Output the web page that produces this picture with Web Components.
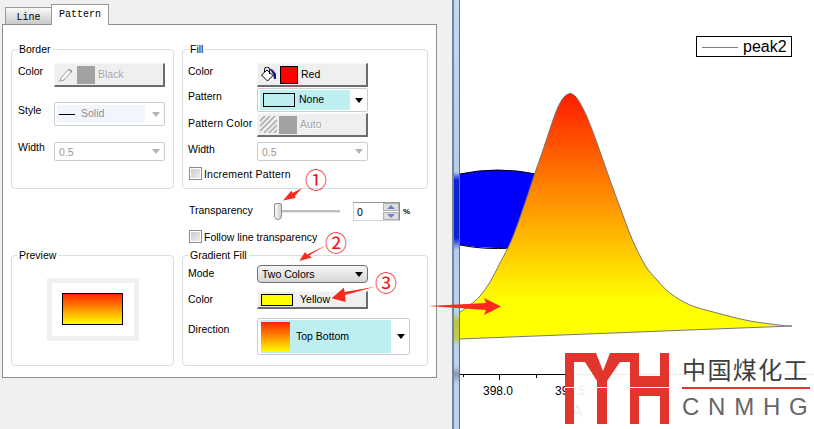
<!doctype html>
<html>
<head>
<meta charset="utf-8">
<title>Pattern</title>
<style>
  html, body { margin: 0; padding: 0; background: #fff; }
  body { width: 814px; height: 429px; overflow: hidden; }
</style>
</head>
<body>
<app-window></app-window>
<script>
(function () {
  class Base extends HTMLElement {
    constructor() {
      super();
      this.attachShadow({ mode: "open" });
    }
    connectedCallback() {
      this.shadowRoot.innerHTML = this.markup();
    }
  }

  class GroupBox extends Base {
    markup() {
      return `
        <style>
          :host { display: block; box-sizing: border-box; position: relative; border: 1px solid #d6dfe6; border-radius: 4px; }
          .title { position: absolute; left: 5px; top: -7px; padding: 0 2px; background: #fff; line-height: 13px; white-space: nowrap; }
        </style>
        <span class="title">${this.getAttribute("title-text")}</span>
        <slot></slot>`;
    }
  }

  class ColorButton extends Base {
    markup() {
      const off = this.hasAttribute("disabled");
      return `
        <style>
          :host { display: flex; box-sizing: border-box; width: 111px; height: 24px; align-items: center;
            background: #efefef; border: 1px solid #f7f7f7; border-right: 2px solid #6c6c6c; border-bottom: 2px solid #6c6c6c; padding-left: 2px; }
          .label { margin-bottom: 2px; color: ${off ? "#a4a4a4" : "#000"}; ${off ? "text-shadow: 1px 1px 0 #fff;" : ""} }
        </style>
        <slot></slot>
        <span class="label">${this.getAttribute("label")}</span>`;
    }
  }

  class ComboBox extends Base {
    markup() {
      const off = this.hasAttribute("disabled");
      const raised = this.hasAttribute("raised");
      return `
        <style>
          :host { display: flex; box-sizing: border-box; width: 111px; height: 24px; align-items: center;
            border: 1px solid ${raised ? "#6f6f6f" : "#c7ced4"}; border-radius: ${raised ? 4 : 2}px;
            background: ${raised ? "linear-gradient(#f6f6f6, #d6d6d6)" : "#fff"}; color: ${off ? "#9a9a9a" : "#000"}; padding-left: 2px; }
          .arrow { margin-left: auto; margin-right: 4px; width: 0; height: 0; flex: none;
            border-left: 4.5px solid transparent; border-right: 4.5px solid transparent;
            border-top: 5px solid ${off ? "#b4b4b4" : "#000"}; }
        </style>
        <slot></slot>
        <span class="arrow"></span>`;
    }
  }

  class CheckField extends Base {
    markup() {
      return `
        <style>
          :host { display: flex; align-items: center; gap: 2px; height: 13px; white-space: nowrap; }
          .box { box-sizing: border-box; width: 13px; height: 13px; border: 1px solid #8b8b8b; outline: 1px solid #fff; outline-offset: -2px;
            background: linear-gradient(135deg, #c6c6c6, #f1f1f1); }
        </style>
        <span class="box"></span><slot></slot>`;
    }
  }

  class SliderField extends Base {
    markup() {
      return `
        <style>
          :host { display: block; position: relative; width: 66px; height: 17px; }
          .track { position: absolute; left: 8px; right: 0; top: 7px; height: 2px; background: #bdbdbd; border-bottom: 1px solid #e6e6e6; }
          .thumb { position: absolute; left: 0; top: 0; box-sizing: border-box; width: 8px; height: 17px; border: 1px solid #8d8d8d;
            border-radius: 2px 2px 4px 4px; background: linear-gradient(90deg, #fafafa, #cfcfcf); }
        </style>
        <span class="track"></span><span class="thumb"></span>`;
    }
  }

  class SpinField extends Base {
    markup() {
      return `
        <style>
          :host { display: flex; box-sizing: border-box; width: 47px; height: 19px; border: 1px solid #ced4da; border-right-color: #8c8c8c; border-top-color: #9a9a9a; align-items: center; padding-left: 3px; }
          .btns { margin-left: auto; width: 16px; display: grid; grid-template-rows: 8px 8px; gap: 1px; }
          .btns span { display: flex; align-items: center; justify-content: center; background: #dedede; border: 1px solid #b0b0b0; box-sizing: border-box; }
          .up { border-left: 4px solid transparent; border-right: 4px solid transparent; border-bottom: 4px solid #6d83c4; }
          .dn { border-left: 4px solid transparent; border-right: 4px solid transparent; border-top: 4px solid #6d83c4; }
        </style>
        <slot></slot>
        <div class="btns"><span><i class="up"></i></span><span><i class="dn"></i></span></div>`;
    }
  }

  class PlotDialog extends Base {
    markup() {
      return `
        <style>
          :host { display: block; width: 452px; height: 429px; background: #f0f0f0; box-sizing: border-box; padding-left: 2px;
            font: 10.5px "Liberation Sans", Arial, sans-serif; color: #000; }
          .tabs { display: flex; height: 24px; align-items: flex-end; padding-left: 3px; font: 10px "Liberation Mono", monospace; }
          .tab { box-sizing: border-box; border: 1px solid #9a9a9a; border-bottom: 0; display: flex; justify-content: center; }
          .tab.line { width: 46px; height: 17px; padding-top: 4px; background: linear-gradient(#fafafa, #c9c9c9); border-right: 0; }
          .tab.on { width: 58px; height: 21px; padding-top: 4px; background: #fff; margin-bottom: -1px; position: relative; }
          .panel { box-sizing: border-box; width: 435px; height: 354px; background: #fff; border: 1px solid #8c8c92; padding: 24px 0 0 8px;
            display: grid; grid-template-columns: 163px 246px; grid-template-rows: 140px 66px 111px; column-gap: 8px; }
          .form { display: grid; align-items: start; }
          .border-form { grid-template-columns: 36px 111px; padding: 13px 0 0 6px; row-gap: 15px; }
          .fill-form { grid-template-columns: 69px 111px; padding: 13px 0 0 5px; row-gap: 1px; }
          .grad-form { grid-template-columns: 69px auto; padding: 9px 0 0 5px; justify-items: start; }
          .lab { line-height: 16px; white-space: nowrap; }
          .val { margin-left: 2px; }
          .up1 { margin-bottom: 2px; }
          .mid { display: flex; flex-direction: column; padding-top: 13px; }
          .trans { display: flex; align-items: center; height: 19px; padding-left: 7px; }
          .trans .lab { width: 85px; margin-bottom: 3px; }
          .trans spin-field { margin-left: 13px; }
          .pct { margin-left: 3px; font-weight: bold; font-size: 8px; }
          .follow { margin: 9px 0 0 7px; }
          .inner { display: flex; align-items: center; }
          .sw { box-sizing: border-box; flex: none; display: block; border: 1px solid #000; }
          .grey { background: #a2a2a2; border: 0; width: 18px; height: 18px; margin: 0 3px 0 4px; }
          .red { background: #f00; width: 18px; height: 18px; margin: 0 3px 0 4px; }
          .cy { background: #bdeef0; }
          svg.ic { width: 15px; height: 15px; flex: none; margin-left: 1px; }
          .preview-wrap { display: flex; padding: 22px 0 0 35px; }
          .preview { box-sizing: border-box; width: 92px; height: 63px; border: 5px solid #f0f0f0; padding: 10px 0 0 10px; }
          .preview i { display: block; box-sizing: border-box; width: 61px; height: 32px; border: 1px solid #000; background: linear-gradient(#ff2400, #ffff00); }
        </style>
        <div class="tabs">
          <div class="tab line">Line</div>
          <div class="tab on">Pattern</div>
        </div>
        <div class="panel">
          <group-box title-text="Border">
            <div class="form border-form">
              <span class="lab">Color</span>
              <color-button label="Black" disabled>
                <svg class="ic" viewBox="0 0 15 15"><path d="M3 11 L11 2 L14 4 L6 13 L2 14 Z" fill="#fff" stroke="#9b9b9b"/><path d="M10.500 2.500 L13.500 5" stroke="#777"/><path d="M0 14h1" stroke="#aaa"/></svg>
                <span class="sw grey"></span>
              </color-button>
              <span class="lab">Style</span>
              <combo-box disabled>
                <span class="inner" style="width:88px;height:18px;background:#f2f6fc;color:#8e8e8e">
                  <i style="display:block;width:16px;height:1px;background:#000;margin:0 6px 0 2px"></i><span class="up1">Solid</span>
                </span>
              </combo-box>
              <span class="lab" style="margin-top:-2px">Width</span>
              <combo-box disabled style="height:19px;margin-top:1px"><span class="val">0.5</span></combo-box>
            </div>
          </group-box>
          <group-box title-text="Fill">
            <div class="form fill-form">
              <span class="lab">Color</span>
              <color-button label="Red">
                <svg class="ic" viewBox="0 0 15 15"><path d="M.500 8 L6 3 L12 8.500 L6.500 14 Z" fill="#fff" stroke="#000"/><path d="M3.500 5 V2.500 A2.500 2.500 0 0 1 8.500 2.500 V7" fill="none" stroke="#000"/><path d="M8 1 L12 3 L15 7 L15 12 L13 12 L12 7 Z" fill="#14148c"/></svg>
                <span class="sw red"></span>
              </color-button>
              <span class="lab">Pattern</span>
              <combo-box>
                <span class="inner cy" style="width:90px;height:20px;gap:4px;padding-left:3px;box-sizing:border-box">
                  <i class="sw cy" style="width:32px;height:14px"></i><span class="up1">None</span>
                </span>
              </combo-box>
              <span class="lab" style="margin-top:2px;letter-spacing:.2px">Pattern Color</span>
              <color-button label="Auto" disabled>
                <svg class="ic" viewBox="0 0 17 17" style="width:17px;height:17px;margin:0 -2px 0 0"><path d="M0 5L5 0M0 10L10 0M0 15L15 0M4 17L17 4M9 17L17 9M14 17L17 14" stroke="#a8a8a8" stroke-width="1.500"/></svg>
                <span class="sw grey"></span>
              </color-button>
              <span class="lab" style="margin-top:3px">Width</span>
              <combo-box disabled style="height:19px;margin-top:4px"><span class="val">0.5</span></combo-box>
              <check-field style="grid-column:1 / 3;margin:5px 0 0 1px;letter-spacing:.2px">Increment Pattern</check-field>
            </div>
          </group-box>
          <div></div>
          <div class="mid">
            <div class="trans">
              <span class="lab">Transparency</span>
              <slider-field></slider-field>
              <spin-field>0</spin-field>
              <span class="pct">%</span>
            </div>
            <check-field class="follow">Follow line transparency</check-field>
          </div>
          <group-box title-text="Preview">
            <div class="preview-wrap"><div class="preview"><i></i></div></div>
          </group-box>
          <group-box title-text="Gradient Fill">
            <div class="form grad-form">
              <span class="lab">Mode</span>
              <combo-box raised style="height:18px"><span class="val">Two Colors</span></combo-box>
              <span class="lab" style="margin-top:8px">Color</span>
              <color-button label="Yellow" style="height:18px;margin-top:8px;padding-left:3px">
                <span class="sw" style="width:32px;height:12px;background:#ff0;margin-right:7px"></span>
              </color-button>
              <span class="lab" style="margin-top:12px">Direction</span>
              <combo-box style="width:153px;height:37px;margin-top:9px;padding-left:3px">
                <span class="inner cy" style="width:130px;height:33px;gap:6px">
                  <i style="display:block;width:29px;height:30px;background:linear-gradient(#ff2400,#ffff00)"></i><span class="up1">Top Bottom</span>
                </span>
              </combo-box>
            </div>
          </group-box>
        </div>`;
    }
  }

  class ChartView extends Base {
    // catmull-rom through the traced points
    smooth(p) {
      let d = "M" + p[0].join(" ");
      for (let i = 0; i < p.length - 1; i++) {
        const a = p[i - 1] || p[i], b = p[i], c = p[i + 1], e = p[i + 2] || c;
        d += " C" + (b[0] + (c[0] - a[0]) / 6) + " " + (b[1] + (c[1] - a[1]) / 6) + " " +
          (c[0] - (e[0] - b[0]) / 6) + " " + (c[1] - (e[1] - b[1]) / 6) + " " + c[0] + " " + c[1];
      }
      return d;
    }
    markup() {
      const top = [[459, 313], [470, 305], [480, 296], [490, 282], [500, 263], [512, 239], [525, 203], [535, 173], [543, 150], [552, 123], [558, 107], [564, 97], [570, 93.5], [575, 96], [580, 103], [587, 117], [597, 143], [610, 180], [621, 210], [632, 239], [645, 265], [657, 280], [670, 293], [690, 305], [717, 313], [750, 321], [787, 326]];
      const line = this.smooth(top);
      const ticks = [[463, 3], [499, 6], [536, 4], [573, 6]];
      return `
        <style>
          :host { display: block; position: relative; flex: 1; height: 429px; background: #fff; font-family: "Liberation Sans", Arial, sans-serif; color: #000; }
          svg { display: block; }
          .legend { position: absolute; left: 236px; top: 36px; box-sizing: border-box; width: 96px; height: 21px; border: 1px solid #000; background: #fff;
            display: flex; align-items: center; font-size: 16px; padding-left: 5px; gap: 5px; }
          .legend i { display: block; width: 36px; height: 1px; background: #808080; margin-top: 1px; }
          .tick { position: absolute; font-size: 12px; line-height: 14px; top: 384px; }
        </style>
        <svg width="354" height="429" viewBox="460 0 354 429">
          <defs><linearGradient id="g" gradientUnits="userSpaceOnUse" x1="0" y1="94" x2="0" y2="300">
            <stop offset="0" stop-color="#ff1c00"/><stop offset="1" stop-color="#ffff00"/>
          </linearGradient></defs>
          <path d="M460 174 Q497 166 536 174 L536 248 L510 248 Q485 249 460 245 Z" fill="#00f"/>
          <path d="M460 174 Q497 166 536 174 M460 245 Q485 250 512 248" fill="none" stroke="#000"/>
          <path d="${line} L459 339 Z" fill="url(#g)"/>
          <path d="${line} L792 326 M459 339 L792 326" fill="none" stroke="#777"/>
          <path d="M460 374.500 H814" stroke="#000"/>
          ${ticks.map(t => `<path d="M${t[0] + .5} 374 v${t[1]}" stroke="#000"/>`).join("")}
        </svg>
        <div class="legend"><i></i>peak2</div>
        <span class="tick" style="left:23px">398.0</span>
        <span class="tick" style="left:95px">398.5</span>
        <span class="tick" style="left:112px;top:403px;font-size:16px;line-height:18px">A</span>`;
    }
  }

  class BrandLogo extends Base {
    markup() {
      return `
        <style>
          :host { position: absolute; left: 565px; top: 350px; width: 249px; height: 79px; background: rgba(255,255,255,.93); display: flex; }
          svg { display: block; flex: none; }
          .txt { margin-left: 13px; width: 128px; }
          .cn { font: 24px/26px "Noto Sans CJK SC", sans-serif; letter-spacing: 1.4px; color: #3e3e3e; margin-top: 6px; white-space: nowrap; }
          .rule { height: 2px; background: #e2352d; margin-top: 5px; }
          .en { font: 24px/24px "Liberation Sans", Arial, sans-serif; color: #666; word-spacing: 2.1px; margin-top: 6px; white-space: nowrap; }
        </style>
        <svg width="104" height="79" viewBox="565 350 104 79">
          <path fill="#e2352d" d="M565 353 H596 L603 371 L610 353 H639 V376 H660 V353 H669 V424 H660 V396 H639 V424 H630 V362 H620 L607 381 V424 H597 V381 L585 362 H574 V424 H565 Z"/>
          <path fill="#fff" d="M565 387 h104 v1 h-104 Z"/>
        </svg>
        <div class="txt">
          <div class="cn">中国煤化工</div>
          <div class="rule"></div>
          <div class="en">C N M H G</div>
        </div>`;
    }
  }

  class CallOuts extends Base {
    markup() {
      return `
        <style>
          :host { position: absolute; left: 0; top: 0; width: 814px; height: 429px; pointer-events: none; }
          svg { position: absolute; left: 0; top: 0; }
          span { position: absolute; width: 24px; text-align: center; color: #f01818; font: 22px/24px "Noto Sans CJK SC", sans-serif; }
        </style>
        <svg width="814" height="429">
          <g fill="#fb2a1e">
            <path d="M283 200.500 L291.500 190.500 L292.500 193 L302 188 L295 196 L295.500 198 Z"/>
            <path d="M299.300 261 L305 252 L307 254.500 L326.700 245 L309 255.500 L312 257.500 Z"/>
            <path d="M331.700 298.300 L344 287.500 L344.500 292 L375 286.700 L345 295 L345.700 302 Z"/>
            <path d="M428 306 L486 303 L484 298 L501 306.500 L484 315 L486 310 Z"/>
          </g>
        </svg>
        <span style="left:304px;top:166px">①</span>
        <span style="left:324px;top:229px">②</span>
        <span style="left:374px;top:269px">③</span>`;
    }
  }

  class AppWindow extends Base {
    markup() {
      return `
        <style>
          :host { display: flex; position: relative; width: 814px; height: 429px; overflow: hidden; }
          .split { flex: none; box-sizing: border-box; width: 8px; height: 429px; border-left: 2px solid #76859a; border-right: 1px solid #5f6f85;
            background: linear-gradient(#c6d8f2 0, #b6ccec 172px, #0a22d8 180px, #0a22d8 238px, #b6ccec 250px, #bcd2ee 312px, #b8c840 322px, #c0c850 338px, #bcd2ee 346px, #bcd2ee 366px, #8796b0 374px, #bcd2ee 384px, #bcd2ee 429px); }
        </style>
        <plot-dialog></plot-dialog>
        <div class="split"></div>
        <chart-view></chart-view>
        <brand-logo></brand-logo>
        <call-outs></call-outs>`;
    }
  }

  customElements.define("group-box", GroupBox);
  customElements.define("color-button", ColorButton);
  customElements.define("combo-box", ComboBox);
  customElements.define("check-field", CheckField);
  customElements.define("slider-field", SliderField);
  customElements.define("spin-field", SpinField);
  customElements.define("plot-dialog", PlotDialog);
  customElements.define("chart-view", ChartView);
  customElements.define("brand-logo", BrandLogo);
  customElements.define("call-outs", CallOuts);
  customElements.define("app-window", AppWindow);
})();
</script>
</body>
</html>
